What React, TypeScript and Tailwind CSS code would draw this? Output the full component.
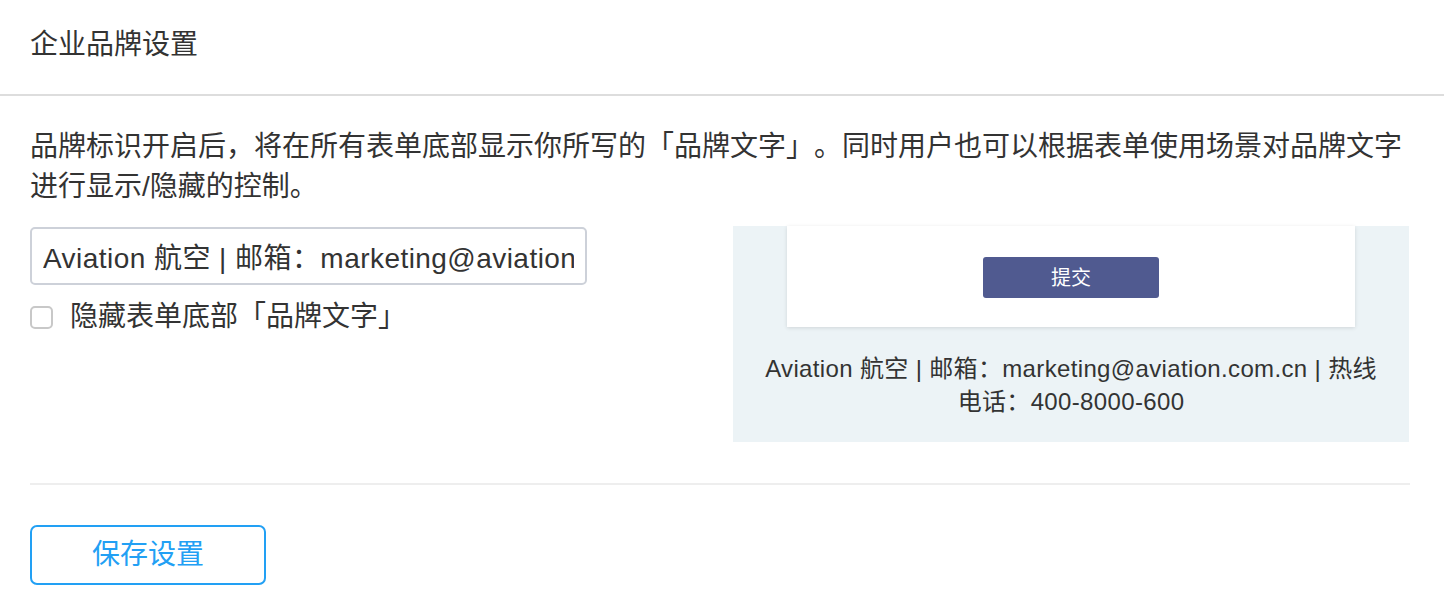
import React from "react";

export default function App() {
  const font = {
    fontFamily: '"Liberation Sans", "Noto Sans CJK SC", sans-serif',
  };
  return (
    <div
      className="w-[1444px] h-[614px] bg-white text-[#333333] overflow-hidden [text-spacing-trim:space-all]"
      style={font}
    >
      <div className="h-[96px] border-b-2 border-[#dddddd] px-[30px] flex items-center">
        <h1 className="text-[28px] leading-[40px] pb-[4px]">企业品牌设置</h1>
      </div>
      <div className="px-[30px]">
        <p className="mt-[31px] text-[28px] leading-[40px] w-[1384px] [text-spacing-trim:space-all]">
          品牌标识开启后，将在所有表单底部显示你所写的「品牌文字」。同时用户也可以根据表单使用场景对品牌文字进行显示/隐藏的控制。
        </p>
        <div className="mt-[19px] flex items-start">
          <div className="w-[703px] pt-[1px]">
            <input
              readOnly
              value="Aviation 航空 | 邮箱：marketing@aviation.com.cn | 热线电话：400-8000-600"
              className="w-[557px] h-[58px] border-2 border-[#cdd1d9] rounded-[5px] px-[11px] text-[28px] tracking-[0.45px] text-[#333333] outline-none [text-spacing-trim:space-all]"
              style={font}
            />
            <label className="mt-[12px] flex items-center h-[40px]">
              <span className="w-[23px] h-[23px] border-2 border-[#c8c8c8] rounded-[5px] bg-white" />
              <span className="ml-[17px] text-[28px] leading-[40px]">隐藏表单底部「品牌文字」</span>
            </label>
          </div>
          <div className="w-[676px] h-[216px] bg-[#ecf3f6] flex flex-col items-center">
            <div className="w-[568px] h-[101px] bg-white shadow-[0_1px_4px_rgba(0,0,0,0.12)] flex items-center justify-center pt-[2px]">
              <div className="w-[176px] h-[41px] bg-[#505a90] rounded-[3px] flex items-center justify-center text-white text-[20px]">
                提交
              </div>
            </div>
            <div className="mt-[25px] text-center text-[24px] leading-[33px] tracking-[0.35px] text-[#333333]">
              Aviation 航空 | 邮箱：marketing@aviation.com.cn | 热线
              <br />
              电话：400-8000-600
            </div>
          </div>
        </div>
        <div className="mt-[41px] h-[2px] bg-[#eeeeee] w-[1380px]" />
        <button
          className="mt-[40px] w-[236px] h-[60px] border-2 border-[#22a0f4] rounded-[7px] text-[#22a0f4] text-[28px] flex items-center justify-center bg-white"
          style={font}
        >
          保存设置
        </button>
      </div>
    </div>
  );
}
